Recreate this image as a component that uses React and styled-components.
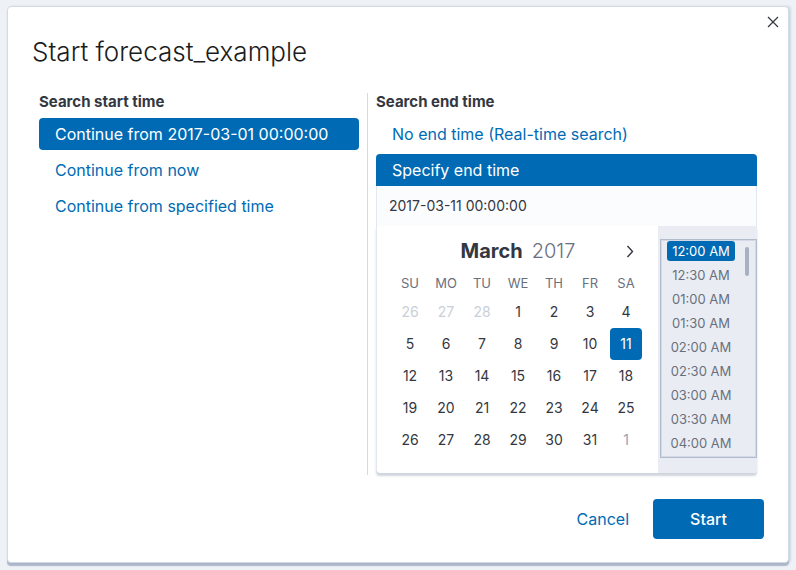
import React from "react";
import styled, { createGlobalStyle } from "styled-components";

const Global = createGlobalStyle`
  body {
    margin: 0;
    background: #eef1f6;
    font-family: Inter, "Noto Sans", "Liberation Sans", sans-serif;
    color: #343741;
    -webkit-font-smoothing: antialiased;
  }
`;

const Page = styled.div`
  padding: 6px 0 0 7px;
  width: 796px;
  height: 570px;
  box-sizing: border-box;
`;

const Modal = styled.div`
  position: relative;
  width: 782px;
  background: #fff;
  border: 1px solid #d3dae6;
  border-radius: 4px;
  box-sizing: border-box;
  box-shadow: 0 3px 1px rgba(110, 128, 158, 0.5), 2px 0 2px rgba(160, 175, 200, 0.35);
`;

const Header = styled.div`
  padding: 27px 24px 0 24px;
`;

const Title = styled.h1`
  margin: 0;
  font-size: 26px;
  line-height: 35px;
  font-weight: 300;
  color: #1a1c21;
`;

const Close = styled.button`
  position: absolute;
  top: 3px;
  right: 3px;
  width: 24px;
  height: 24px;
  border: 0;
  background: none;
  padding: 0;
  display: flex;
  align-items: center;
  justify-content: center;
`;

const Body = styled.div`
  display: flex;
  padding: 24px 31px 0 31px;
`;

const Column = styled.div`
  ${(p) =>
    p.left
      ? `flex: 0 0 329px; border-right: 1px solid #d3dae6; padding-right: 8px;`
      : `flex: 1; padding-left: 8px; padding-bottom: 2px;`}
  box-sizing: border-box;
`;

const Label = styled.div`
  font-size: 15px;
  font-weight: 700;
  line-height: 17px;
  color: #343741;
  margin-bottom: 8px;
`;

const Option = styled.div`
  height: 32px;
  line-height: 32px;
  padding: 0 16px;
  font-size: 16px;
  margin-bottom: ${(p) => (p.attached ? "0" : "4px")};
  border-radius: ${(p) => (p.attached ? "4px 4px 0 0" : "4px")};
  background: ${(p) => (p.selected ? "#006bb4" : "transparent")};
  color: ${(p) => (p.selected ? "#fff" : "#006bb4")};
`;

const DateInput = styled.div`
  height: 40px;
  line-height: 40px;
  padding: 0 12px;
  font-size: 14px;
  background: #fbfcfd;
  border-left: 1px solid #e3e8f0;
  border-right: 1px solid #e3e8f0;
  color: #343741;
`;

const Popover = styled.div`
  display: flex;
  height: 247px;
  background: #fff;
  border-left: 1px solid #e3e8f0;
  border-radius: 0 0 4px 4px;
  box-shadow: 0 3px 2px rgba(152, 162, 179, 0.45);
`;

const Calendar = styled.div`
  flex: 0 0 281px;
  padding: 12px 14px 0 15px;
  box-sizing: border-box;
`;

const MonthRow = styled.div`
  display: grid;
  grid-template-columns: 1fr auto 1fr;
  align-items: center;
  height: 26px;
  margin-bottom: 6px;
`;

const MonthName = styled.div`
  grid-column: 2;
  font-size: 20px;
  line-height: 26px;
  white-space: nowrap;
`;

const Month = styled.span`
  font-weight: 700;
  color: #343741;
  margin-right: 9px;
`;

const Year = styled.span`
  font-weight: 300;
  color: #69707d;
`;

const Next = styled.div`
  justify-self: end;
  margin-right: 10px;
  display: flex;
`;

const Grid = styled.div`
  display: grid;
  grid-template-columns: repeat(7, 36px);
  justify-items: center;
`;

const WeekDay = styled.div`
  height: 26px;
  line-height: 26px;
  font-size: 13px;
  color: #69707d;
`;

const Day = styled.div`
  width: 32px;
  height: 32px;
  line-height: 32px;
  text-align: center;
  font-size: 14px;
  border-radius: 4px;
  background: ${(p) => (p.selected ? "#006bb4" : "transparent")};
  color: ${(p) =>
    p.selected ? "#fff" : p.faded ? "#c9cfd8" : p.next ? "#98a2b3" : "#343741"};
`;

const TimePanel = styled.div`
  flex: 1;
  background: #e9edf3;
  padding: 13px 0 15px 2px;
  border-radius: 0 0 4px 0;
`;

const TimeBox = styled.div`
  position: relative;
  height: 219px;
  box-sizing: border-box;
  border: 1px solid #b2bccb;
  box-shadow: inset 0 0 0 1px #d3dae6;
  padding-top: 1px;
  overflow: hidden;
`;

const Time = styled.div`
  width: 68px;
  height: 20px;
  line-height: 20px;
  margin: 0 0 4px 6px;
  text-align: center;
  font-size: 13px;
  border-radius: 3px;
  background: ${(p) => (p.selected ? "#006bb4" : "transparent")};
  color: ${(p) => (p.selected ? "#fff" : "#69707d")};
`;

const Thumb = styled.div`
  position: absolute;
  top: 7px;
  right: 7px;
  width: 4px;
  height: 29px;
  border-radius: 2px;
  background: #a7b1c0;
`;

const Footer = styled.div`
  display: flex;
  justify-content: flex-end;
  align-items: center;
  gap: 12px;
  padding: 24px 24px 23px;
`;

const Button = styled.button`
  height: 40px;
  min-width: ${(p) => (p.fill ? "111px" : "0")};
  padding: 0 12px;
  border: 0;
  border-radius: 4px;
  font-family: inherit;
  font-size: 16px;
  font-weight: ${(p) => (p.fill ? 500 : 400)};
  background: ${(p) => (p.fill ? "#006bb4" : "transparent")};
  color: ${(p) => (p.fill ? "#fff" : "#006bb4")};
`;

const weekDays = ["SU", "MO", "TU", "WE", "TH", "FR", "SA"];
const times = [
  "12:00 AM",
  "12:30 AM",
  "01:00 AM",
  "01:30 AM",
  "02:00 AM",
  "02:30 AM",
  "03:00 AM",
  "03:30 AM",
  "04:00 AM",
];

function days() {
  const list = [26, 27, 28].map((d) => ({ d, faded: true }));
  for (let d = 1; d <= 31; d++) list.push({ d, selected: d === 11 });
  list.push({ d: 1, next: true });
  return list;
}

export default function App() {
  return (
    <Page>
      <Global />
      <Modal>
        <Close aria-label="close">
          <svg width="12" height="12" viewBox="0 0 12 12">
            <path d="M1 1L11 11M11 1L1 11" stroke="#343741" strokeWidth="1.2" fill="none" />
          </svg>
        </Close>
        <Header>
          <Title>Start forecast_example</Title>
        </Header>
        <Body>
          <Column left>
            <Label>Search start time</Label>
            <Option selected>Continue from 2017-03-01 00:00:00</Option>
            <Option>Continue from now</Option>
            <Option>Continue from specified time</Option>
          </Column>
          <Column>
            <Label>Search end time</Label>
            <Option>No end time (Real-time search)</Option>
            <Option selected attached>
              Specify end time
            </Option>
            <DateInput>2017-03-11 00:00:00</DateInput>
            <Popover>
              <Calendar>
                <MonthRow>
                  <MonthName>
                    <Month>March</Month>
                    <Year>2017</Year>
                  </MonthName>
                  <Next>
                    <svg width="8" height="13" viewBox="0 0 8 13">
                      <path d="M1.5 1L6.5 6.5L1.5 12" stroke="#343741" strokeWidth="1.4" fill="none" />
                    </svg>
                  </Next>
                </MonthRow>
                <Grid>
                  {weekDays.map((w) => (
                    <WeekDay key={w}>{w}</WeekDay>
                  ))}
                  {days().map((x, i) => (
                    <Day key={i} faded={x.faded} next={x.next} selected={x.selected}>
                      {x.d}
                    </Day>
                  ))}
                </Grid>
              </Calendar>
              <TimePanel>
                <TimeBox>
                  {times.map((t, i) => (
                    <Time key={t} selected={i === 0}>
                      {t}
                    </Time>
                  ))}
                  <Thumb />
                </TimeBox>
              </TimePanel>
            </Popover>
          </Column>
        </Body>
        <Footer>
          <Button>Cancel</Button>
          <Button fill>Start</Button>
        </Footer>
      </Modal>
    </Page>
  );
}
